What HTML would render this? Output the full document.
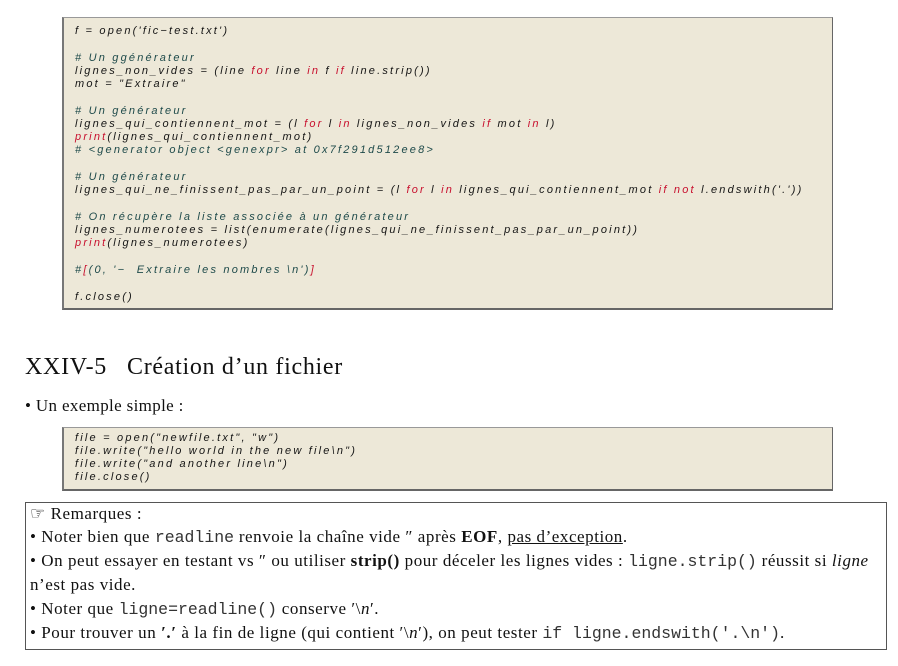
<!DOCTYPE html>
<html><head><meta charset="utf-8"><style>
body{margin:0;width:898px;height:666px;background:#fff;position:relative;overflow:hidden;font-family:"Liberation Serif",serif;color:#111}
.code{position:absolute;left:62px;width:771px;background:#ede8d8;border:1px solid #999;border-left:2px solid #777;border-bottom:2px solid #666;border-right:1px solid #666;box-sizing:border-box}
.l{position:absolute;left:11px;white-space:pre;font-family:"Liberation Sans",sans-serif;font-style:italic;font-size:11px;letter-spacing:2.2px;line-height:13px;color:#151515}
.k{color:#c8102e}.c{color:#1e4a4a}
.t{position:absolute;white-space:pre;font-size:17px;line-height:20px;letter-spacing:0.35px}
.r{letter-spacing:0.55px}
.m{font-family:"Liberation Mono",monospace;font-size:16.5px;color:#333;letter-spacing:0}
</style></head><body>
<div class="code" style="top:17px;height:293px">
<div class="l" style="top:7px">f = open('fic−test.txt')</div>
<div class="l c" style="top:34px"># Un ggénérateur</div>
<div class="l" style="top:47px">lignes_non_vides = (line <span class="k">for</span> line <span class="k">in</span> f <span class="k">if</span> line.strip())</div>
<div class="l" style="top:60px">mot = "Extraire"</div>
<div class="l c" style="top:87px"># Un générateur</div>
<div class="l" style="top:100px">lignes_qui_contiennent_mot = (l <span class="k">for</span> l <span class="k">in</span> lignes_non_vides <span class="k">if</span> mot <span class="k">in</span> l)</div>
<div class="l" style="top:113px"><span class="k">print</span>(lignes_qui_contiennent_mot)</div>
<div class="l c" style="top:126px"># &lt;generator object &lt;genexpr&gt; at 0x7f291d512ee8&gt;</div>
<div class="l c" style="top:153px"># Un générateur</div>
<div class="l" style="top:166px">lignes_qui_ne_finissent_pas_par_un_point = (l <span class="k">for</span> l <span class="k">in</span> lignes_qui_contiennent_mot <span class="k">if</span> <span class="k">not</span> l.endswith('.'))</div>
<div class="l c" style="top:193px"># On récupère la liste associée à un générateur</div>
<div class="l" style="top:206px">lignes_numerotees = list(enumerate(lignes_qui_ne_finissent_pas_par_un_point))</div>
<div class="l" style="top:219px"><span class="k">print</span>(lignes_numerotees)</div>
<div class="l c" style="top:246px">#<span class="k">[</span>(0, '−  Extraire les nombres \n')<span class="k">]</span></div>
<div class="l" style="top:273px">f.close()</div>
</div>
<div class="t" style="left:25px;top:353px;font-size:24px;line-height:28px;letter-spacing:0.7px">XXIV-5<span style="display:inline-block;width:20px"></span>Création d’un fichier</div>
<div class="t" style="left:25px;top:396px">• Un exemple simple :</div>
<div class="code" style="top:427px;height:64px">
<div class="l" style="top:4px">file = open("newfile.txt", "w")</div>
<div class="l" style="top:17px">file.write("hello world in the new file\n")</div>
<div class="l" style="top:30px">file.write("and another line\n")</div>
<div class="l" style="top:43px">file.close()</div>
</div>
<div style="position:absolute;left:25px;top:502px;width:862px;height:148px;border:1px solid #555;box-sizing:border-box"></div>
<div class="t r" style="left:30px;top:504px">☞ Remarques :</div>
<div class="t r" style="left:30px;top:527px">• Noter bien que <span class="m">readline</span> renvoie la chaîne vide ″ après <b>EOF</b>, <u>pas d’exception</u>.</div>
<div class="t r" style="left:30px;top:551px">• On peut essayer en testant vs ″ ou utiliser <b>strip()</b> pour déceler les lignes vides : <span class="m">ligne.strip()</span> réussit si <i>ligne</i></div>
<div class="t r" style="left:30px;top:575px">n’est pas vide.</div>
<div class="t r" style="left:30px;top:599px">• Noter que <span class="m">ligne=readline()</span> conserve ′\<i>n</i>′.</div>
<div class="t r" style="left:30px;top:623px">• Pour trouver un <b>′.′</b> à la fin de ligne (qui contient ′\<i>n</i>′), on peut tester <span class="m">if ligne.endswith('.\n')</span>.</div>
</body></html>
